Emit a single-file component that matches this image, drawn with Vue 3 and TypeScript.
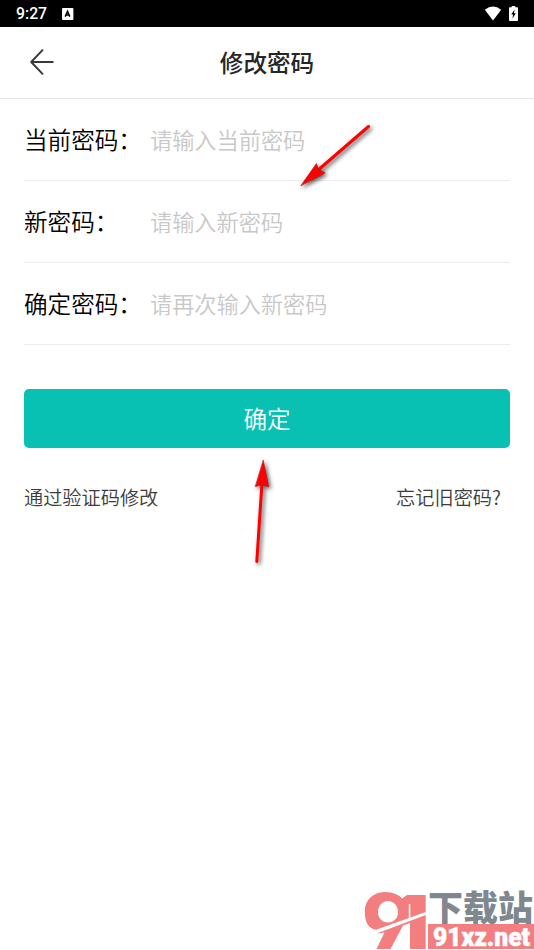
<script setup lang="ts">
import { ref } from 'vue'

interface Field {
  id: string
  label: string
  hint: string
}

const fields: Field[] = [
  { id: 'current', label: '当前密码：', hint: '请输入当前密码' },
  { id: 'next', label: '新密码：', hint: '请输入新密码' },
  { id: 'confirm', label: '确定密码：', hint: '请再次输入新密码' },
]
const values = ref<Record<string, string>>({ current: '', next: '', confirm: '' })
</script>

<template>
  <div class="screen">
    <div class="status">
      <span class="time">9:27</span>
      <svg class="badge" width="12" height="12" viewBox="0 0 12 12">
        <rect width="11.4" height="12" rx="1" fill="#fff" />
        <path d="M3.2 8.6 5.5 3.4 7.8 8.6M4.2 7H7.2" fill="none" stroke="#000" stroke-width="1.5" />
      </svg>
      <svg class="wifi" width="18" height="15" viewBox="0 0 18 15">
        <path d="M.8 3.7Q9-2.8 17.2 3.7L9 14.4Z" fill="#fff" />
      </svg>
      <svg class="battery" width="10" height="16" viewBox="0 0 10 16">
        <path d="M2.7 0H6.3V1.3H8.2Q9 1.3 9 2.1V14.2Q9 15 8.2 15H.8Q0 15 0 14.2V2.1Q0 1.3.8 1.3H2.7Z" fill="#fff" />
        <path d="M5.5 3.6 2.3 8.5H4.1L3.5 12.6 6.8 7.3H5Z" fill="#000" />
      </svg>
    </div>
    <header class="bar">
      <svg class="back" width="24" height="26" viewBox="0 0 24 26">
        <path d="M12.5 1.2 1.2 13 12.5 24.8M1.2 13H22.8" fill="none" stroke="#38383b" stroke-width="1.9" stroke-linecap="round" stroke-linejoin="round" />
      </svg>
      <h1>修改密码</h1>
    </header>
    <main>
      <label v-for="field in fields" :key="field.id" class="row">
        <span class="name">{{ field.label }}</span>
        <input v-model="values[field.id]" type="password" :placeholder="field.hint" />
      </label>
      <button class="submit" type="button">确定</button>
      <div class="links">
        <a>通过验证码修改</a>
        <a>忘记旧密码?</a>
      </div>
    </main>

    <svg class="arrows" width="534" height="950" viewBox="0 0 534 950">
      <g class="arrow">
        <path d="M368.5 126.5 317 171" />
        <path class="head" d="M301 185.5 316.5 163.500 318.5 169.5 324.8 172.8Z" />
      </g>
      <g class="arrow">
        <path d="M256.8 561.5 261.8 486" />
        <path class="head" d="M263.3 460.5 268.6 486.8 262 484.5 255.6 486.5Z" />
      </g>
    </svg>

    <div class="mark">
      <svg width="62" height="60" viewBox="0 0 62 60">
        <path fill="#f37e80" fill-rule="evenodd" d="M22 2C9.500 2 .8 9.500 .8 21C.8 32 4 38.500 12 39.800L44.800 28V14H46.300V27.400L61.700 22V5H43L38 8.500Q32 2 22 2ZM24 11C30 11 34 16 34 22S30 32.500 24 32.500 14 28 14 22 18 11 24 11Z" />
        <path fill="#f37e80" d="M12.500 43.500 61.700 25V59H46V33L39 35.500 26.500 59H12.500L20.500 42.500Z" />
      </svg>
      <svg class="words" width="106" height="60" viewBox="0 0 106 60">
        <text class="cn" x="0" y="31" textLength="105" lengthAdjust="spacingAndGlyphs">下载站</text>
        <rect x="0" y="34" width="106" height="25" fill="#f37e80" />
        <text class="en" x="5" y="55.500" textLength="97" lengthAdjust="spacingAndGlyphs">91xz.net</text>
      </svg>
    </div>
  </div>
</template>

<style>
body {
  margin: 0;
  background: #fff;
}
</style>

<style scoped>
.screen {
  position: relative;
  width: 534px;
  height: 950px;
  overflow: hidden;
  background: #fff;
  font-family: "Noto Sans CJK SC DemiLight", "Noto Sans CJK SC", sans-serif;
  font-weight: 350;
}
.status {
  display: flex;
  align-items: center;
  box-sizing: border-box;
  height: 27px;
  padding: 0 16px 0 16px;
  background: #000;
  color: #fff;
}
.time {
  width: 46px;
  font: 500 15.8px/27px Roboto, sans-serif;
}
.badge {
  margin-top: 1px;
}
.wifi {
  margin-left: auto;
  margin-right: 7px;
}
.battery {
  margin-right: -1px;
}
.bar {
  display: flex;
  align-items: center;
  box-sizing: border-box;
  height: 72px;
  padding: 0 30px 2px;
  border-bottom: 1px solid #e5e5e5;
}
h1 {
  flex: 1;
  margin: 0 24px 0 0;
  color: #242628;
  font-family: "Noto Sans CJK SC", sans-serif;
  font-size: 23.6px;
  font-weight: 500;
  line-height: 36px;
  text-align: center;
}
main {
  padding: 0 24px;
}
.row {
  display: flex;
  align-items: center;
  box-sizing: border-box;
  height: 82px;
  padding-bottom: 2px;
  border-bottom: 1px solid #ececec;
}
.name {
  flex: none;
  width: 126px;
  color: #000;
  font-size: 23.6px;
  line-height: 36px;
  white-space: nowrap;
}
input {
  flex: 1;
  min-width: 0;
  padding: 0;
  border: 0;
  outline: 0;
  background: none;
  font: inherit;
  font-size: 22.2px;
  line-height: 34px;
}
input::placeholder {
  color: #c8c8c8;
  opacity: 1;
}
.submit {
  display: block;
  width: 100%;
  height: 59px;
  margin-top: 44px;
  padding: 0;
  border: 0;
  border-radius: 5px;
  background: #08c1b2;
  color: #fff;
  font: inherit;
  font-size: 23.6px;
  line-height: 59px;
}
.links {
  display: flex;
  justify-content: space-between;
  padding: 34px 9px 0 0;
  color: #3c3c3c;
  font-size: 19.2px;
  line-height: 30px;
}
.arrows {
  position: absolute;
  inset: 0;
  pointer-events: none;
}
.arrow {
  fill: none;
  stroke: #f00;
  stroke-width: 3;
  stroke-linecap: round;
  filter: drop-shadow(2px 2px 2px rgba(0, 0, 0, 0.65));
}
.head {
  fill: #f00;
  stroke: #c01010;
  stroke-width: 0.7;
}
.mark {
  position: absolute;
  right: 0;
  bottom: 0;
  display: flex;
  gap: 2px;
}
.mark svg {
  display: block;
}
.mark .words {
  overflow: visible;
}
.cn {
  fill: #7f888f;
  font: 900 35px "Noto Sans CJK SC", sans-serif;
}
.en {
  fill: #fff;
  stroke: #fff;
  stroke-width: 0.5;
  font: 900 25px Roboto, sans-serif;
}
</style>
